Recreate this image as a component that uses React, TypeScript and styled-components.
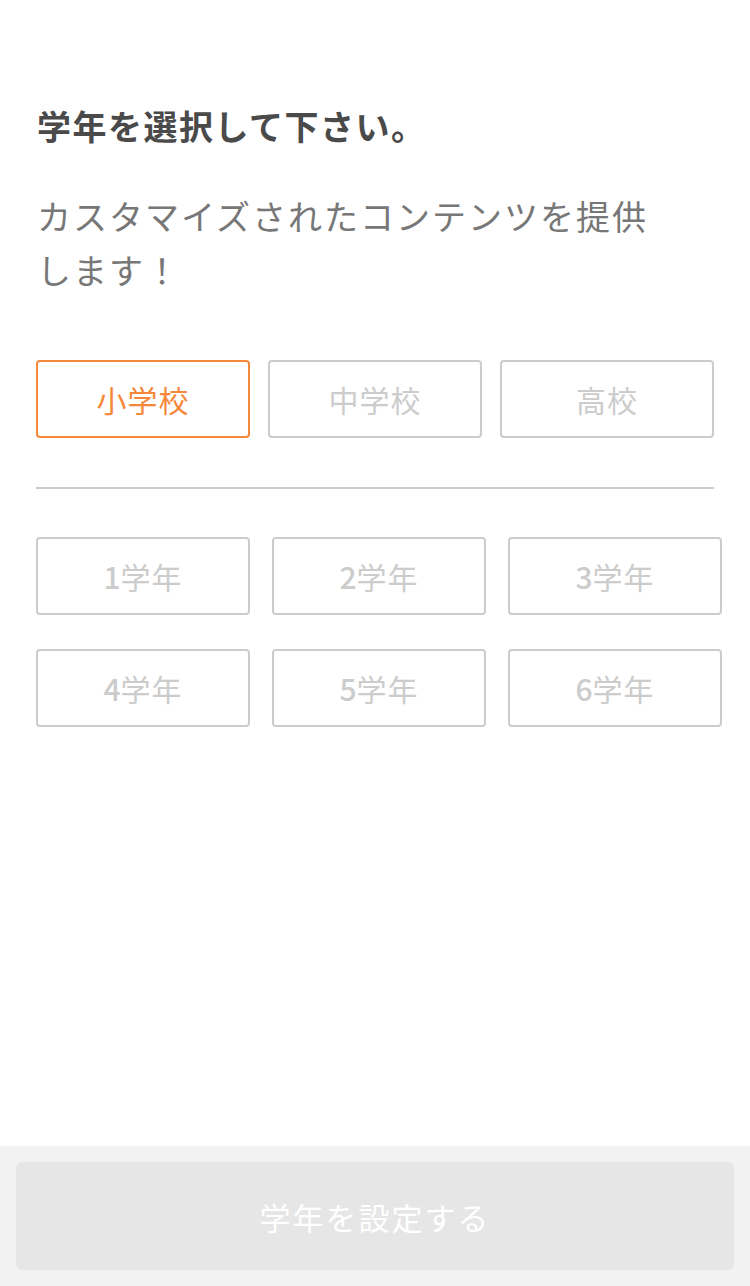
import React, { useState } from "react";
import styled, { createGlobalStyle } from "styled-components";

const GlobalStyle = createGlobalStyle`
  html, body {
    margin: 0;
    padding: 0;
    background: #ffffff;
  }
  body {
    font-family: "Noto Sans CJK JP", "Noto Sans", sans-serif;
    -webkit-font-smoothing: antialiased;
  }
  * { box-sizing: border-box; }
`;

const Page = styled.div`
  min-height: 100vh;
  display: flex;
  flex-direction: column;
`;

const Content = styled.main`
  padding: 102px 36px 0 36px;
  display: flex;
  flex-direction: column;
`;

const Title = styled.h1`
  margin: 0 0 39px 1px;
  font-size: 34px;
  line-height: 48px;
  font-weight: 700;
  color: #4a4a4a;
  letter-spacing: 1.5px;
`;

const Lead = styled.p`
  margin: 0 0 63px 1px;
  font-size: 34px;
  line-height: 54px;
  font-weight: 400;
  color: #777777;
  letter-spacing: 2px;
`;

const SchoolRow = styled.div`
  display: grid;
  grid-template-columns: repeat(3, 214px);
  column-gap: 18px;
`;

const Choice = styled.button<{ $active?: boolean }>`
  height: 78px;
  width: 214px;
  padding: 0;
  border: 2px solid ${(p) => (p.$active ? "#f5883a" : "#cccccc")};
  border-radius: 4px;
  background: #ffffff;
  color: ${(p) => (p.$active ? "#f5883a" : "#cccccc")};
  font-family: "Noto Sans CJK JP", "Noto Sans", sans-serif;
  font-size: 30px;
  font-weight: 400;
  letter-spacing: 1px;
  display: flex;
  align-items: center;
  justify-content: center;
  cursor: pointer;
`;

const Num = styled.span`
  font-weight: 500;
  letter-spacing: 0;
`;

const Divider = styled.hr`
  margin: 49px 0 48px 0;
  width: 678px;
  border: none;
  height: 2px;
  background: #cccccc;
`;

const GradeGrid = styled.div`
  display: grid;
  grid-template-columns: repeat(3, 214px);
  column-gap: 22px;
  row-gap: 34px;
`;

const Footer = styled.footer`
  margin-top: auto;
  background: #f2f2f2;
  padding: 16px;
`;

const Submit = styled.button`
  width: 100%;
  height: 108px;
  border: none;
  border-radius: 6px;
  background: #e6e6e6;
  color: #ffffff;
  font-family: "Noto Sans CJK JP", "Noto Sans", sans-serif;
  font-size: 31px;
  font-weight: 400;
  letter-spacing: 2px;
  display: flex;
  align-items: center;
  justify-content: center;
`;

const schools = ["小学校", "中学校", "高校"];
const grades = [1, 2, 3, 4, 5, 6];

export default function App() {
  const [school, setSchool] = useState(0);
  const [grade, setGrade] = useState<number | null>(null);
  return (
    <Page>
      <GlobalStyle />
      <Content>
        <Title>学年を選択して下さい。</Title>
        <Lead>
          カスタマイズされたコンテンツを提供
          <br />
          します！
        </Lead>
        <SchoolRow>
          {schools.map((s, i) => (
            <Choice key={s} $active={school === i} onClick={() => setSchool(i)}>
              {s}
            </Choice>
          ))}
        </SchoolRow>
        <Divider />
        <GradeGrid>
          {grades.map((g) => (
            <Choice key={g} $active={grade === g} onClick={() => setGrade(g)}>
              <Num>{g}</Num>学年
            </Choice>
          ))}
        </GradeGrid>
      </Content>
      <Footer>
        <Submit>学年を設定する</Submit>
      </Footer>
    </Page>
  );
}
